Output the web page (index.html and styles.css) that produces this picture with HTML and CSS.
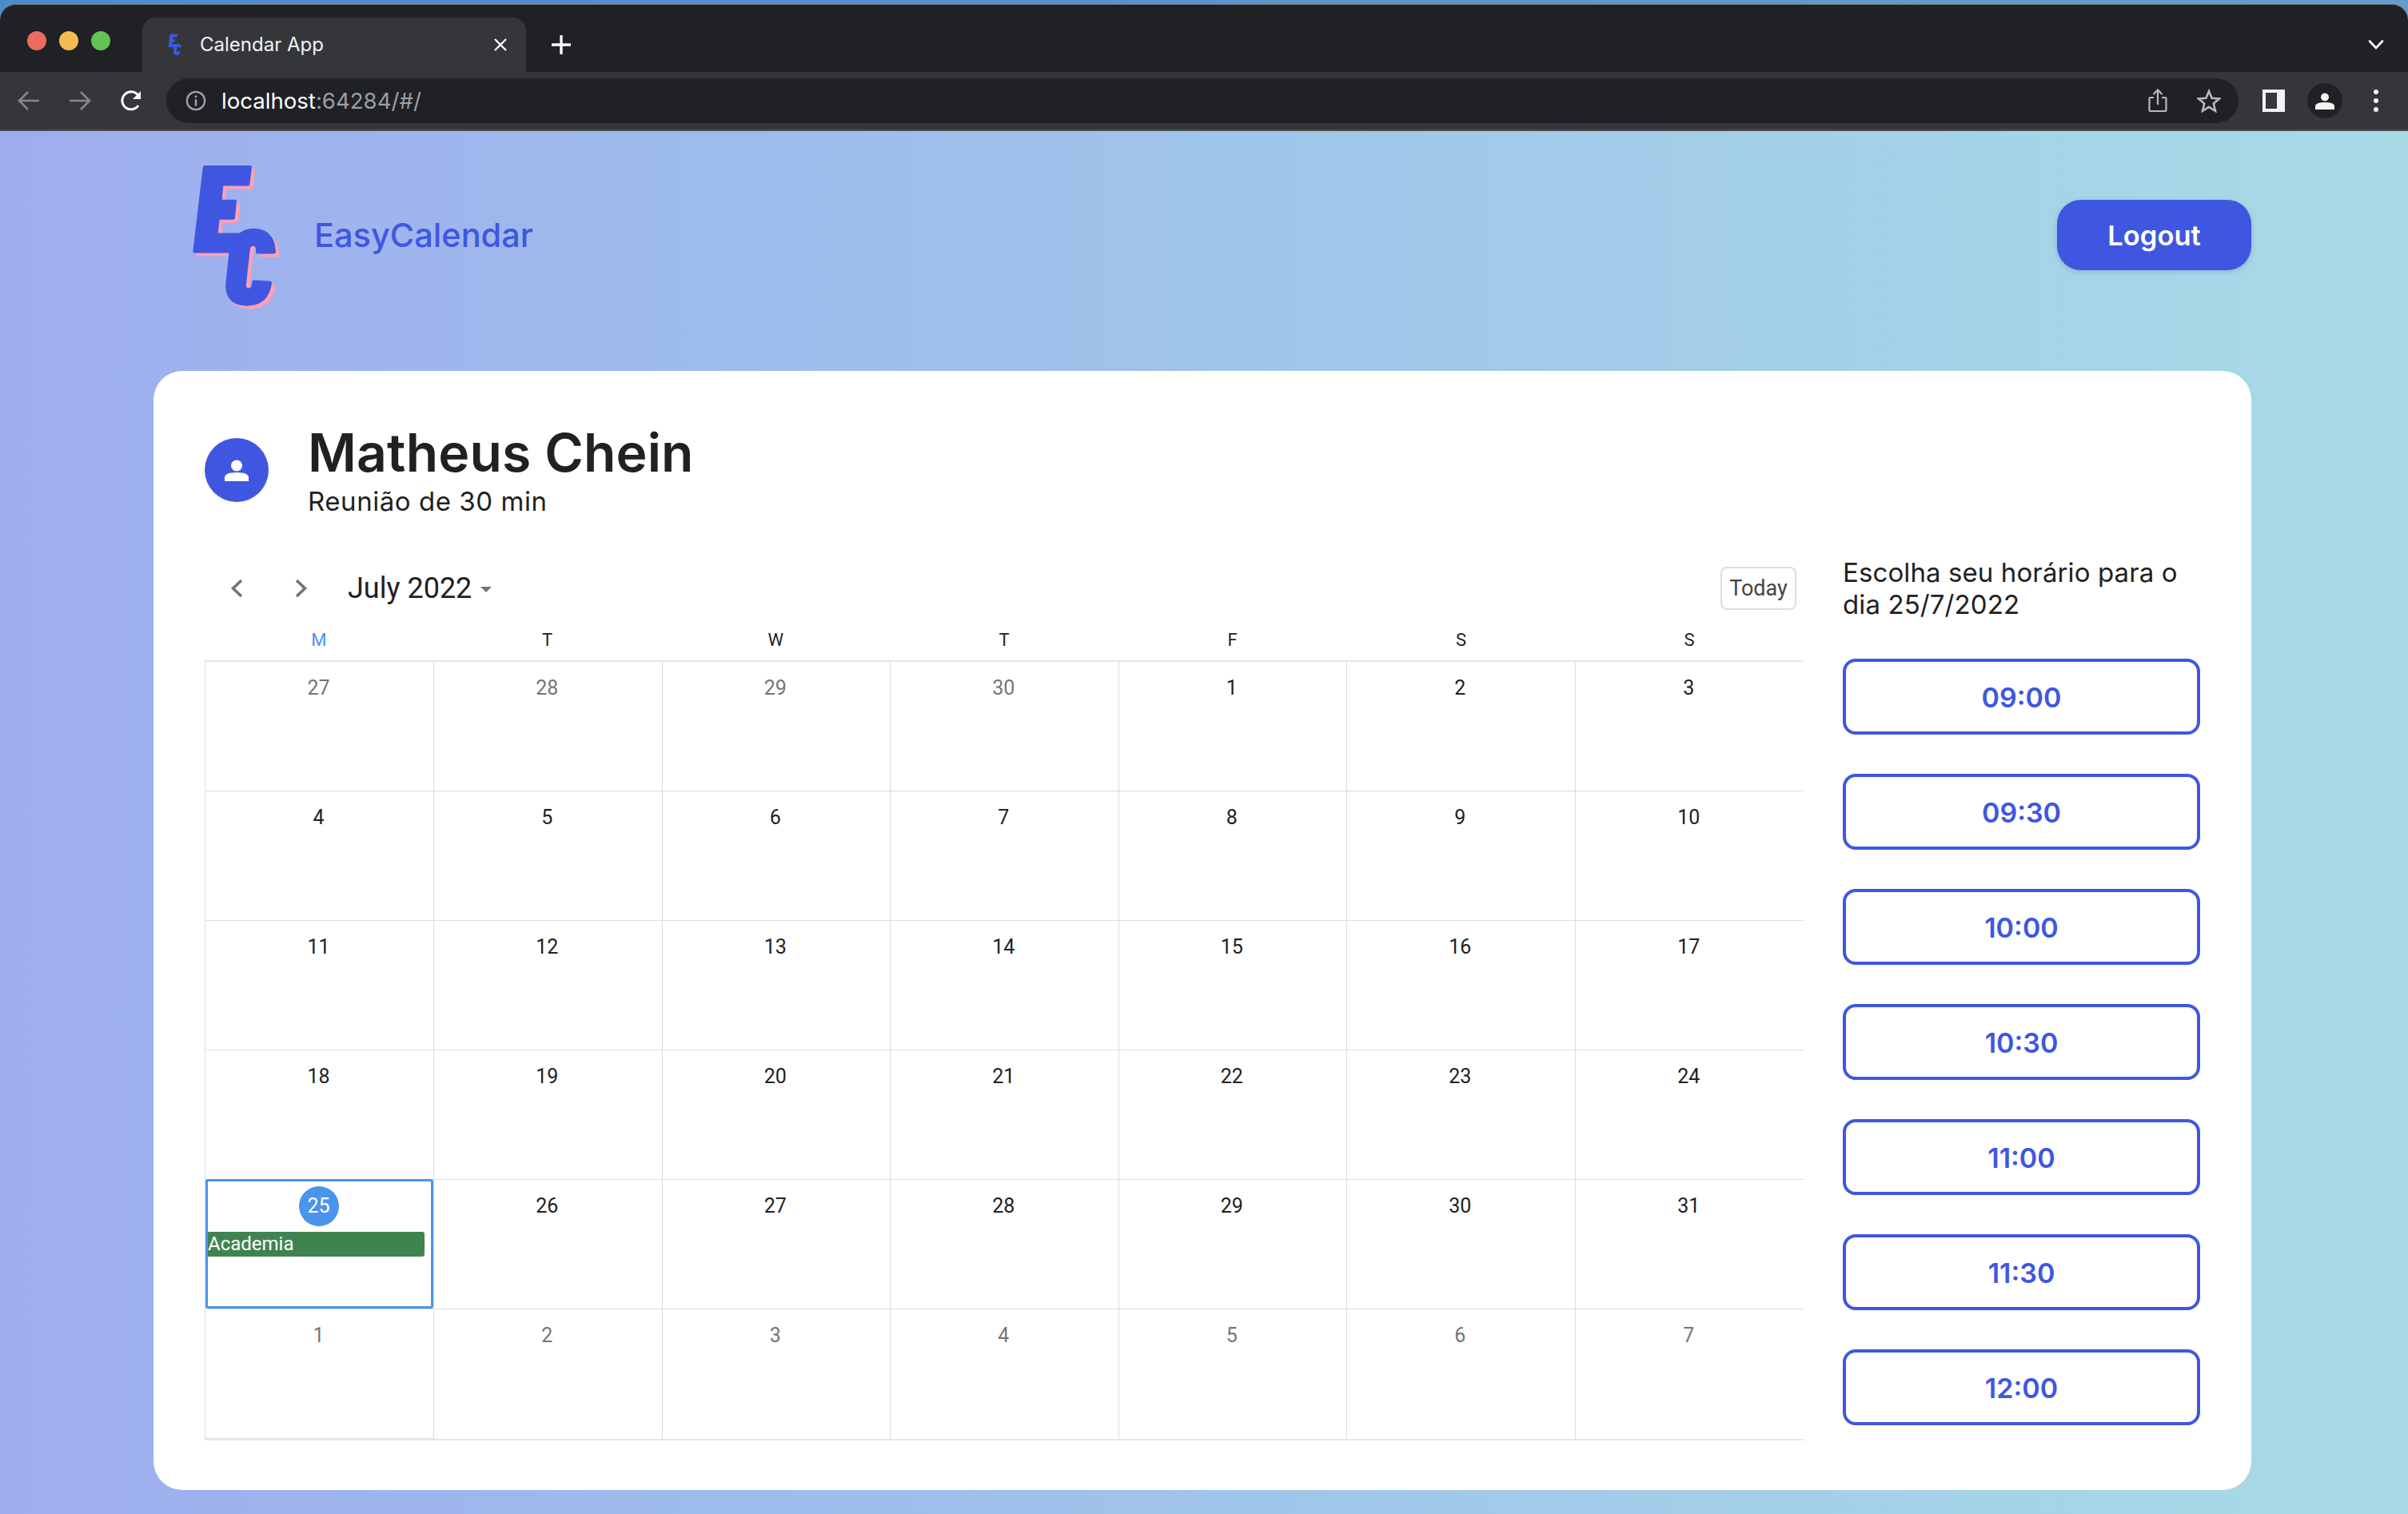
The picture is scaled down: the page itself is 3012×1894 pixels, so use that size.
FILE: index.html
```html
<!DOCTYPE html>
<html lang="pt-BR">
<head>
<meta charset="utf-8">
<title>Calendar App</title>
<link rel="stylesheet" href="styles.css">
</head>
<body>
<svg class="defs" width="0" height="0" aria-hidden="true">
  <defs>
    <path id="ec" d="M207 118Q208 112 214 112L372 112Q379 112 378 119L371 182Q370 188 364 188L278 188L274 240L319 240Q326 240 325 247L319 309Q318 315 312 315L265 315L260 365L335 365Q355 348 388 348Q442 350 458 405L462 434Q462 443 454 443L398 443Q392 443 392 436L392 424Q390 414 382 414Q373 416 372 426L358 560Q358 572 368 572Q376 570 378 558L379 548Q380 542 386 542L440 545Q449 546 448 554Q436 638 360 638Q286 636 286 560L298 440L178 440Q171 440 172 433Z"/>
  </defs>
</svg>
<div class="top-strip">
  <div class="browser">
    <div class="tabbar">
      <div class="lights"><i class="light red"></i><i class="light yellow"></i><i class="light green"></i></div>
      <div class="tab">
        <svg class="favicon" viewBox="160 100 330 560" preserveAspectRatio="none"><use href="#ec" fill="#3f57e0"/></svg>
        <span class="tab-title">Calendar App</span>
        <svg class="tab-close" viewBox="0 0 18 18"><path d="M2 2L16 16M16 2L2 16" stroke="#fff" stroke-width="2.4" fill="none"/></svg>
      </div>
      <svg class="new-tab" viewBox="0 0 24 24"><path d="M12 1V23M1 12H23" stroke="#fff" stroke-width="3.4" fill="none" stroke-linecap="round"/></svg>
      <svg class="tab-menu" viewBox="0 0 20 14"><path d="M2 2.500L10 11L18 2.500" stroke="#fff" stroke-width="2.600" fill="none" stroke-linecap="round"/></svg>
    </div>
    <div class="toolbar">
      <div class="nav">
        <svg class="nav-icon" viewBox="0 0 28 28"><path d="M27 14H3M13 3L2 14L13 25" stroke="#85878a" stroke-width="2.600" fill="none"/></svg>
        <svg class="nav-icon" viewBox="0 0 28 28"><path d="M1 14H25M15 3L26 14L15 25" stroke="#85878a" stroke-width="2.600" fill="none"/></svg>
        <svg class="nav-icon" viewBox="0 0 28 28"><path d="M23 20A11 11 0 1 1 22.500 7" stroke="#fff" stroke-width="3" fill="none"/><path d="M26 2V12H16Z" fill="#fff"/></svg>
      </div>
      <div class="urlbar">
        <svg class="info" viewBox="0 0 28 28"><circle cx="14" cy="14" r="12" stroke="#a3a5a8" stroke-width="2.400" fill="none"/><path d="M14 12V21M14 7V10" stroke="#a3a5a8" stroke-width="2.600"/></svg>
        <span class="url">localhost<span class="url-dim">:64284/#/</span></span>
        <svg class="url-icon" viewBox="0 0 24 30"><path d="M7 11H3Q1.500 11 1.500 12.500V26.500Q1.500 28 3 28H21Q22.500 28 22.500 26.500V12.500Q22.500 11 21 11H17M12 20V2M6.500 7L12 1.500L17.500 7" stroke="#b8b9bb" stroke-width="2.200" fill="none"/></svg>
        <svg class="url-icon star" viewBox="0 0 30 30"><path d="M15 3L18.600 11.800L28 12.500L20.800 18.600L23 27.800L15 22.800L7 27.800L9.200 18.600L2 12.500L11.400 11.800Z" stroke="#b8b9bb" stroke-width="2.600" fill="none"/></svg>
      </div>
      <div class="actions">
        <div class="panel-icon"><i></i></div>
        <div class="profile-chip">
          <svg viewBox="0 0 24 24"><circle cx="12" cy="7.500" r="5" fill="#f1f3f4"/><path d="M0 23V19Q0 14 12 14Q24 14 24 19V23Z" fill="#f1f3f4"/></svg>
        </div>
        <div class="kebab"><i></i><i></i><i></i></div>
      </div>
    </div>
  </div>
</div>

<main class="page">
  <header class="site-header">
    <div class="brand">
      <svg class="logo" viewBox="160 100 330 560" preserveAspectRatio="none">
        <use href="#ec" fill="#ff9fb3" transform="translate(12 12)"/>
        <use href="#ec" fill="#3f57e0"/>
      </svg>
      <span class="brand-name">EasyCalendar</span>
    </div>
    <button class="logout">Logout</button>
  </header>

  <section class="card">
    <div class="profile">
      <div class="avatar">
        <svg viewBox="0 0 30 30"><circle cx="15" cy="8.500" r="7" fill="#fff"/><path d="M0 28V23Q1 17 15 17Q29 17 30 23V28Z" fill="#fff"/></svg>
      </div>
      <div class="profile-text">
        <h1 class="name">Matheus Chein</h1>
        <p class="meeting">Reunião de 30 min</p>
      </div>
    </div>

    <div class="booking">
      <div class="calendar">
        <div class="cal-toolbar">
          <svg class="chev" viewBox="0 0 16 24"><path d="M14 2L3.500 12L14 22" stroke="#757575" stroke-width="3.600" fill="none"/></svg>
          <svg class="chev chev-next" viewBox="0 0 16 24"><path d="M2 2L12.500 12L2 22" stroke="#757575" stroke-width="3.600" fill="none"/></svg>
          <span class="month">July 2022</span>
          <i class="caret"></i>
          <button class="today">Today</button>
        </div>
        <div class="weekdays">
          <span class="wd wd-active">M</span><span class="wd">T</span><span class="wd">W</span><span class="wd">T</span><span class="wd">F</span><span class="wd">S</span><span class="wd">S</span>
        </div>
        <div class="grid">
          <div class="cell dim"><span class="num">27</span></div>
          <div class="cell dim"><span class="num">28</span></div>
          <div class="cell dim"><span class="num">29</span></div>
          <div class="cell dim"><span class="num">30</span></div>
          <div class="cell"><span class="num">1</span></div>
          <div class="cell"><span class="num">2</span></div>
          <div class="cell"><span class="num">3</span></div>
          <div class="cell"><span class="num">4</span></div>
          <div class="cell"><span class="num">5</span></div>
          <div class="cell"><span class="num">6</span></div>
          <div class="cell"><span class="num">7</span></div>
          <div class="cell"><span class="num">8</span></div>
          <div class="cell"><span class="num">9</span></div>
          <div class="cell"><span class="num">10</span></div>
          <div class="cell"><span class="num">11</span></div>
          <div class="cell"><span class="num">12</span></div>
          <div class="cell"><span class="num">13</span></div>
          <div class="cell"><span class="num">14</span></div>
          <div class="cell"><span class="num">15</span></div>
          <div class="cell"><span class="num">16</span></div>
          <div class="cell"><span class="num">17</span></div>
          <div class="cell"><span class="num">18</span></div>
          <div class="cell"><span class="num">19</span></div>
          <div class="cell"><span class="num">20</span></div>
          <div class="cell"><span class="num">21</span></div>
          <div class="cell"><span class="num">22</span></div>
          <div class="cell"><span class="num">23</span></div>
          <div class="cell"><span class="num">24</span></div>
          <div class="cell selected"><span class="num today-num">25</span><div class="event">Academia</div></div>
          <div class="cell"><span class="num">26</span></div>
          <div class="cell"><span class="num">27</span></div>
          <div class="cell"><span class="num">28</span></div>
          <div class="cell"><span class="num">29</span></div>
          <div class="cell"><span class="num">30</span></div>
          <div class="cell"><span class="num">31</span></div>
          <div class="cell dim"><span class="num">1</span></div>
          <div class="cell dim"><span class="num">2</span></div>
          <div class="cell dim"><span class="num">3</span></div>
          <div class="cell dim"><span class="num">4</span></div>
          <div class="cell dim"><span class="num">5</span></div>
          <div class="cell dim"><span class="num">6</span></div>
          <div class="cell dim"><span class="num">7</span></div>
        </div>
      </div>

      <aside class="slots">
        <p class="slots-title">Escolha seu horário para o dia 25/7/2022</p>
        <button class="slot">09:00</button>
        <button class="slot">09:30</button>
        <button class="slot">10:00</button>
        <button class="slot">10:30</button>
        <button class="slot">11:00</button>
        <button class="slot">11:30</button>
        <button class="slot">12:00</button>
      </aside>
    </div>
  </section>
</main>
</body>
</html>
```

FILE: styles.css
```css
* { box-sizing: border-box; }
html, body { margin: 0; padding: 0; }
body {
  width: 3012px;
  height: 1894px;
  overflow: hidden;
  font-family: "Inter", "Liberation Sans", sans-serif;
  color: #212121;
  background: #9fadee;
}
.defs { display: block; height: 0; }

/* browser chrome */
.top-strip {
  height: 164px;
  padding-top: 5px;
  background: linear-gradient(90deg, #4a8ccb, #659dd0);
}
.browser {
  height: 159px;
  display: flex;
  flex-direction: column;
  background: #202124;
  border-radius: 20px 20px 0 0;
  border-top: 1px solid #77787a;
}
.tabbar {
  height: 84px;
  padding-top: 16px;
  display: flex;
  align-items: stretch;
}
.lights {
  width: 178px;
  padding: 17px 0 0 34px;
  display: flex;
  gap: 16px;
}
.light { width: 24px; height: 24px; border-radius: 50%; }
.red { background: #ee6a5f; }
.yellow { background: #f5bd4f; }
.green { background: #61c454; }
.tab {
  width: 480px;
  height: 68px;
  padding: 0 23px 0 32px;
  display: flex;
  align-items: center;
  background: #35363a;
  border-radius: 16px 16px 0 0;
}
.favicon { width: 18px; height: 28px; flex: none; }
.tab-title {
  margin-left: 22px;
  flex: 1;
  color: #f1f3f4;
  font-size: 24px;
  line-height: 32px;
}
.tab-close { width: 18px; height: 18px; }
.new-tab { width: 24px; height: 24px; margin: 22px 0 0 32px; }
.tab-menu { width: 20px; height: 14px; margin: 27px 0 0 2248px; }
.toolbar {
  height: 74px;
  padding: 8px 0;
  display: flex;
  align-items: center;
  background: #35363a;
  border-bottom: 2px solid #4c4d50;
}
.nav {
  width: 208px;
  padding-left: 22px;
  display: flex;
  gap: 36px;
  flex: none;
}
.nav-icon { width: 28px; height: 28px; }
.urlbar {
  width: 2592px;
  height: 56px;
  padding: 0 22px 0 24px;
  display: flex;
  align-items: center;
  background: #202124;
  border-radius: 28px;
  flex: none;
}
.info { width: 26px; height: 26px; flex: none; }
.url {
  margin-left: 19px;
  flex: 1;
  color: #fff;
  font-size: 27.600px;
  line-height: 36px;
}
.url-dim { color: #9aa0a6; }
.url-icon { width: 24px; height: 30px; }
.star { width: 30px; margin-left: 37px; }
.actions {
  flex: 1;
  padding-left: 30px;
  display: flex;
  align-items: center;
}
.panel-icon {
  width: 28px;
  height: 28px;
  padding: 4px 10px 4px 4px;
  background: #f1f3f4;
}
.panel-icon i { display: block; height: 100%; background: #35363a; }
.profile-chip {
  width: 44px;
  height: 44px;
  margin-left: 28px;
  padding: 10px;
  border-radius: 50%;
  background: #202124;
}
.profile-chip svg { display: block; width: 24px; height: 24px; }
.kebab {
  margin-left: 39px;
  display: flex;
  flex-direction: column;
  gap: 5px;
}
.kebab i { width: 6px; height: 6px; border-radius: 50%; background: #f1f3f4; }

/* page */
.page {
  height: 1730px;
  padding: 0 196px 0 192px;
  background: linear-gradient(90deg, #9fadee 0%, #9dbdec 33%, #a2cbe9 66%, #a8dbe6 100%);
}
.site-header {
  height: 260px;
  margin-bottom: 40px;
  padding-left: 45px;
  display: flex;
  align-items: center;
  justify-content: space-between;
}
.brand { display: flex; align-items: center; }
.logo { width: 118px; height: 187px; margin-top: 4px; }
.brand-name {
  margin: 0 0 0 38px;
  color: #3f57e0;
  font-size: 41.500px;
  font-weight: 500;
  line-height: 52px;
}
.logout {
  width: 243px;
  height: 88px;
  border: 0;
  border-radius: 30px;
  background: #3f57e0;
  color: #fff;
  font: 600 34.500px "Inter", sans-serif;
  box-shadow: 0 2px 6px rgba(60, 80, 160, .25);
}
.card {
  height: 1400px;
  padding: 64px 64px 0;
  border-radius: 36px;
  background: #fff;
}
.profile {
  height: 120px;
  display: flex;
  align-items: center;
}
.avatar {
  width: 80px;
  height: 80px;
  padding: 26px 25px 24px;
  border-radius: 50%;
  background: #3f57e0;
  flex: none;
}
.avatar svg { display: block; width: 30px; height: 30px; }
.profile-text { margin-left: 49px; }
.name {
  margin: 0;
  font-size: 66px;
  font-weight: 600;
  line-height: 78px;
  letter-spacing: .15px;
}
.meeting {
  margin: 0;
  font-size: 33px;
  line-height: 44px;
  letter-spacing: .55px;
}
.booking {
  margin-top: 48px;
  display: flex;
  gap: 49px;
}
.calendar { width: 2000px; flex: none; }
.cal-toolbar {
  height: 80px;
  padding-left: 32px;
  display: flex;
  align-items: center;
}
.chev { width: 16px; height: 24px; flex: none; }
.chev-next { margin-left: 65px; }
.month {
  margin-left: 50px;
  font-family: "Roboto", sans-serif;
  font-size: 36px;
  line-height: 44px;
}
.caret {
  margin: 2px 0 0 11px;
  border: 7px solid transparent;
  border-top: 7px solid #757575;
  border-bottom: 0;
}
.today {
  width: 95px;
  height: 54px;
  margin-left: auto;
  margin-right: 9px;
  padding: 0;
  border: 2px solid #ddd;
  border-radius: 8px;
  background: #fff;
  color: #444;
  font: 27px "Roboto", sans-serif;
}
.weekdays {
  height: 50px;
  padding-top: 13px;
  display: grid;
  grid-template-columns: repeat(7, 1fr);
}
.wd {
  text-align: center;
  font-family: "Roboto", sans-serif;
  font-size: 22px;
  line-height: 24px;
}
.wd-active { color: #4a94ee; }
.grid {
  display: grid;
  grid-template-columns: repeat(7, 1fr);
  grid-auto-rows: 162px;
  border-left: 1px solid #e0e0e0;
  border-bottom: 2px solid #e6e6e6;
  border-top: 2px solid #e6e6e6;
}
.cell {
  position: relative;
  padding: 8px 2px 0 0;
  display: flex;
  flex-direction: column;
  align-items: center;
  border-right: 1px solid #dcdcdc;
  border-bottom: 1px solid #dcdcdc;
  font-family: "Roboto", sans-serif;
  font-size: 25px;
}
.cell:nth-child(7n) { border-right: 0; }
.cell:nth-child(n+37) { border-bottom: 0; }
.num {
  width: 50px;
  height: 50px;
  text-align: center;
  line-height: 49px;
}
.dim { color: #757575; }
.today-num {
  border-radius: 50%;
  background: #4a94ee;
  color: #fff;
}
.selected::after {
  content: "";
  position: absolute;
  inset: -1px 0 0 0;
  border: 3px solid #4a94ee;
  border-radius: 3px;
}
.event {
  width: 274px;
  height: 31px;
  margin: 7px 9px 0 0;
  padding-left: 3px;
  border-radius: 3px;
  background: #3f8450;
  color: #fff;
  font-size: 24px;
  line-height: 30px;
}
.slots { width: 447px; flex: none; }
.slots-title {
  height: 80px;
  margin: 0 0 48px;
  font-size: 33px;
  line-height: 40px;
  letter-spacing: .1px;
}
.slot {
  display: block;
  width: 100%;
  height: 95px;
  margin-bottom: 49px;
  padding: 2px 0 0;
  border: 4px solid #3f57e0;
  border-radius: 16px;
  background: #fff;
  color: #3f57e0;
  font: 600 34px "Inter", sans-serif;
}
```
